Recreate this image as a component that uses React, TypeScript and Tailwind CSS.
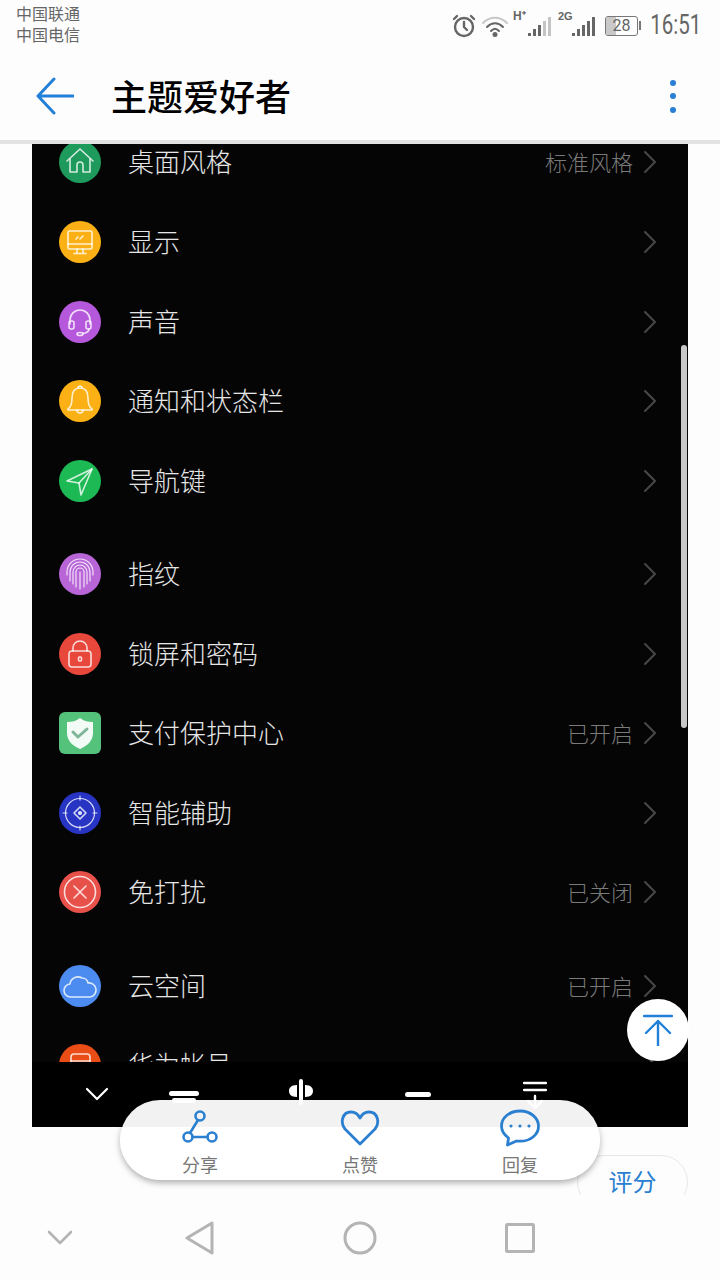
const cjk = { fontFamily: '"Noto Sans CJK SC", "Noto Sans", sans-serif' }

const S = { fill: 'none', stroke: 'currentColor', strokeLinecap: 'round', strokeLinejoin: 'round' } as const

function RowIcon({ name }: { name: string }) {
  const base = { ...S, strokeWidth: 1.6 }
  switch (name) {
    case 'home':
      return <svg width="42" height="42" viewBox="0 0 42 42" {...base}><path d="M8 20 21 8l13 12" /><path d="M11 18v13h7v-7a3 3 0 0 1 6 0v7h7V18" /></svg>
    case 'display':
      return <svg width="42" height="42" viewBox="0 0 42 42" {...base}><rect x="9" y="10" width="24" height="18" rx="1.5" /><path d="M9 23h24M18 28v4M24 28v4M15 32.500h12M19 16l-2 2M24 15l-3 3" /></svg>
    case 'sound':
      return <svg width="42" height="42" viewBox="0 0 42 42" {...base}><path d="M11 23v-4a10 10 0 0 1 20 0v4" /><rect x="10" y="20" width="5" height="8" rx="2" /><rect x="27" y="20" width="5" height="8" rx="2" /><path d="M30 28c0 3-3 4-6 4.500" /><ellipse cx="21" cy="33" rx="3" ry="1.500" /></svg>
    case 'bell':
      return <svg width="42" height="42" viewBox="0 0 42 42" {...base}><path d="M21 8c-6 0-8 5-8 10 0 6-1 9-4 11v1h24v-1c-3-2-4-5-4-11 0-5-2-10-8-10Z" /><path d="M18 30a3 3 0 0 0 6 0M19 8a2 2 0 0 1 4 0" /></svg>
    case 'nav':
      return <svg width="42" height="42" viewBox="0 0 42 42" {...base}><path d="M33 9 8 21l12 2 2 12Z" /><path d="M33 9 20 23" /></svg>
    case 'finger':
      return <svg width="42" height="42" viewBox="0 0 42 42" {...base} strokeWidth="1.2"><path d="M8 22v-3a13 13 0 0 1 26 0v3" /><path d="M11 28v-9a10 10 0 0 1 20 0v9" /><path d="M14 31V19a7 7 0 0 1 14 0v12" /><path d="M17 34V19a4 4 0 0 1 8 0v15" /><path d="M21 19v17" /></svg>
    case 'lock':
      return <svg width="42" height="42" viewBox="0 0 42 42" {...base}><rect x="10" y="18" width="22" height="16" rx="3" /><path d="M14 18v-3a7 7 0 0 1 14 0v3" /><rect x="19.500" y="24" width="3" height="4" rx="1" /></svg>
    case 'shield':
      return (
        <svg width="42" height="42" viewBox="0 0 42 42">
          <path d="M21 6c4 3 8 4 13 4v11c0 8-6 13-13 16C14 34 8 29 8 21V10c5 0 9-1 13-4Z" fill="#f2fbf5" />
          <path d="m14 20 5 5 9-8" fill="none" stroke="#7fb598" strokeWidth="3" strokeLinecap="round" strokeLinejoin="round" />
        </svg>
      )
    case 'assist':
      return <svg width="42" height="42" viewBox="0 0 42 42" {...base} strokeWidth="1.2"><circle cx="21" cy="21" r="14.500" /><path d="M21 4v4M21 34v4M4 21h4M34 21h4" /><path d="m21 15 6 6-6 6-6-6Z" strokeWidth="1.600" /><circle cx="21" cy="21" r="1.500" fill="currentColor" /></svg>
    case 'dnd':
      return <svg width="42" height="42" viewBox="0 0 42 42" {...base}><circle cx="21" cy="21" r="15.500" /><path d="m15 15 12 12M27 15 15 27" /></svg>
    case 'cloud':
      return <svg width="42" height="42" viewBox="0 0 42 42" {...base}><path d="M12 32a6.500 6.500 0 0 1-1-13 8 8 0 0 1 12-6 6 6 0 0 1 6 5 7 7 0 0 1 2 14Z" /></svg>
    default:
      return <svg width="42" height="42" viewBox="0 0 42 42" {...base}><rect x="12" y="10" width="19" height="20" rx="3" /><path d="M12 17h19M18 24h8" /></svg>
  }
}

type Row = { icon: string; bg: string; label: string; value?: string; square?: boolean }

const groups: Row[][] = [
  [
    { icon: 'home', bg: 'bg-[#1e9a5c]', label: '桌面风格', value: '标准风格' },
    { icon: 'display', bg: 'bg-[#fbb116]', label: '显示' },
    { icon: 'sound', bg: 'bg-[#b658dc]', label: '声音' },
    { icon: 'bell', bg: 'bg-[#fbb116]', label: '通知和状态栏' },
    { icon: 'nav', bg: 'bg-[#1cb954]', label: '导航键' },
  ],
  [
    { icon: 'finger', bg: 'bg-[#b865d8]', label: '指纹' },
    { icon: 'lock', bg: 'bg-[#e8483c]', label: '锁屏和密码' },
    { icon: 'shield', bg: 'bg-[#55c27c]', label: '支付保护中心', value: '已开启', square: true },
    { icon: 'assist', bg: 'bg-[#2835c4]', label: '智能辅助' },
    { icon: 'dnd', bg: 'bg-[#e8504a]', label: '免打扰', value: '已关闭' },
  ],
  [
    { icon: 'cloud', bg: 'bg-[#4c8cf0]', label: '云空间', value: '已开启' },
    { icon: 'account', bg: 'bg-[#ea4d15]', label: '华为帐号' },
  ],
]

function SettingRow({ row }: { row: Row }) {
  return (
    <div className="flex h-[79.6px] items-center pl-[27px] pr-[32px]">
      <div className={`flex h-[42px] w-[42px] shrink-0 items-center justify-center text-white/80 ${row.bg} ${row.square ? 'rounded-[6px]' : 'rounded-full'}`}>
        <RowIcon name={row.icon} />
      </div>
      <span className="ml-[27px] flex-1 pb-[2px] text-[26px] font-light leading-none text-[#e6e6e6]">{row.label}</span>
      {row.value && <span className="mr-[11px] pb-[2px] text-[22px] font-light leading-none text-[#7a7a7a]">{row.value}</span>}
      <svg width="12" height="24" viewBox="0 0 12 24" {...S} strokeWidth="2" className="text-[#484848]"><path d="m1 2 10 10L1 22" /></svg>
    </div>
  )
}

function StatusIcons() {
  return (
    <div className="flex items-center text-[#666]">
      <svg width="26" height="26" viewBox="0 0 26 26" {...S} strokeWidth="2.400" className="mr-[4px]">
        <circle cx="13" cy="14" r="9" /><path d="M13 9v5l3 3M3 6l3-3M23 6l-3-3" />
      </svg>
      <svg width="28" height="24" viewBox="0 0 28 24" {...S} strokeWidth="2" className="mr-[4px]">
        <path d="M2 9c7-7 17-7 24 0" className="text-[#c8c8c8]" /><path d="M6 13c5-5 11-5 16 0" /><path d="M10 17c3-3 5-3 8 0" /><circle cx="14" cy="20.500" r="1.500" fill="currentColor" />
      </svg>
      <div className="relative mr-[5px] h-[26px] w-[40px]">
        <span className="absolute left-0 top-[-3px] text-[12px] font-bold leading-[12px]" style={{ fontFamily: '"Liberation Sans", sans-serif' }}>H⁺</span>
        <svg width="26" height="24" viewBox="0 0 26 24" className="absolute right-0 top-[2px]" fill="currentColor">
          <rect x="1" y="18" width="3" height="3" /><rect x="6" y="14" width="3" height="7" /><rect x="11" y="10" width="3" height="11" /><rect x="16" y="6" width="3" height="15" fill="#c4c4c4" /><rect x="21" y="2" width="3" height="19" fill="#c4c4c4" />
        </svg>
      </div>
      <div className="relative mr-[9px] h-[26px] w-[38px]">
        <span className="absolute left-0 top-[-3px] text-[11px] font-bold leading-[12px]" style={{ fontFamily: '"Liberation Sans", sans-serif' }}>2G</span>
        <svg width="24" height="24" viewBox="0 0 24 24" className="absolute right-0 top-[2px]" fill="currentColor">
          <rect x="0" y="18" width="3" height="3" /><rect x="5" y="14" width="3" height="7" /><rect x="10" y="10" width="3" height="11" /><rect x="15" y="6" width="3" height="15" /><rect x="20" y="2" width="3" height="19" />
        </svg>
      </div>
      <div className="flex items-center">
        <div className="relative flex h-[20px] w-[33px] items-center justify-center overflow-hidden rounded-[3px] border border-[#777]">
          <div className="absolute inset-y-0 left-0 w-[10px] bg-[#c9c9c9]" />
          <span className="relative text-[16px] leading-none" style={{ fontFamily: 'Roboto, sans-serif' }}>28</span>
        </div>
        <div className="ml-[1px] h-[9px] w-[2px] bg-[#777]" />
      </div>
      <span className="ml-[3px] inline-block w-[52px] text-center text-[27px] leading-none [transform:scaleX(.76)]" style={{ fontFamily: 'Roboto, sans-serif' }}>16:51</span>
    </div>
  )
}

function Toolbar() {
  return (
    <div className="flex h-[65px] shrink-0 items-start bg-black pl-[48px] pt-[21px] text-white">
      <div className="flex w-[34px] justify-center pt-[4px]">
        <svg width="22" height="14" viewBox="0 0 22 14" {...S} strokeWidth="2.200"><path d="m1 2 10 10L21 2" /></svg>
      </div>
      <div className="ml-[11px] flex w-[117px] justify-center">
        <svg width="30" height="20" viewBox="0 0 30 20" fill="currentColor"><rect x="0" y="8" width="30" height="5" rx="2.500" /><rect x="3" y="15" width="24" height="5" rx="2" /></svg>
      </div>
      <div className="flex w-[117px] justify-center">
        <svg width="26" height="26" viewBox="0 0 26 26" fill="currentColor" className="-mt-[4px]"><rect x="11" y="0" width="4" height="26" rx="2" /><path d="M9 6v12c-6 0-8-3-8-6s2-6 8-6ZM17 6v12c6 0 8-3 8-6s-2-6-8-6Z" /></svg>
      </div>
      <div className="flex w-[117px] justify-center">
        <svg width="28" height="20" viewBox="0 0 28 20" fill="currentColor"><rect x="1" y="9" width="26" height="5" rx="2.500" /></svg>
      </div>
      <div className="flex w-[117px] justify-center">
        <svg width="24" height="28" viewBox="0 0 24 28" {...S} strokeWidth="2.400" className="-mt-[2px]"><path d="M1 2h22M1 9h22M12 15v12M5 20l7 7 7-7" /></svg>
      </div>
    </div>
  )
}

export default function App() {
  return (
    <div className="relative flex h-[1280px] w-[720px] flex-col overflow-hidden bg-[#fdfdfd]" style={cjk}>
      <div className="flex h-[56px] shrink-0 items-start justify-between pl-[16px] pr-[24px] pt-[3px]">
        <div className="text-[16px] leading-[21px] text-[#666]">
          <div>中国联通</div>
          <div>中国电信</div>
        </div>
        <div className="pt-[9px]"><StatusIcons /></div>
      </div>

      <header className="flex h-[84px] shrink-0 items-center pb-[4px] pl-[36px] pr-[44px]">
        <svg width="38" height="38" viewBox="0 0 38 38" {...S} strokeWidth="3" className="text-[#2280d8]"><path d="M37 19H2M18 2 2 19l16 17" /></svg>
        <h1 className="ml-[37px] flex-1 pb-[2px] text-[36px] font-medium leading-none text-black">主题爱好者</h1>
        <div className="flex flex-col gap-[7.500px]">
          <span className="h-[6px] w-[6px] rounded-full bg-[#2a7fd4]" />
          <span className="h-[6px] w-[6px] rounded-full bg-[#2a7fd4]" />
          <span className="h-[6px] w-[6px] rounded-full bg-[#2a7fd4]" />
        </div>
      </header>
      <div className="h-[4px] shrink-0 bg-[#e3e3e3]" />

      <div className="relative mx-[32px] flex h-[983px] shrink-0 flex-col bg-[#050505]">
        <div className="flex-1 overflow-hidden">
          <div className="-mt-[21.400px]">
            {groups.map((group, i) => (
              <div key={i} className={i > 0 ? 'mt-[13.600px]' : ''}>
                {group.map(row => <SettingRow key={row.label} row={row} />)}
              </div>
            ))}
          </div>
        </div>
        <Toolbar />
        <div className="absolute right-[1px] top-[201px] h-[383px] w-[6px] rounded-full bg-[#c8c8c8]" />
      </div>

      <div className="flex h-[68px] shrink-0 justify-end overflow-hidden pr-[32px] pt-[28px]">
        <div className="flex h-[54px] w-[111px] items-center justify-center rounded-full border border-[#e8e8e8] pb-[2px] text-[24px] text-[#2a80d0]">评分</div>
      </div>

      <nav className="flex flex-1 items-center">
        <div className="flex w-[120px] justify-center text-[#b4b4b4]">
          <svg width="26" height="16" viewBox="0 0 26 16" {...S} strokeWidth="2.600"><path d="m2 2 11 11L24 2" /></svg>
        </div>
        <div className="flex w-[160px] justify-center text-[#b4b4b4]">
          <svg width="30" height="34" viewBox="0 0 30 34" {...S} strokeWidth="3"><path d="M27 2 2 17l25 15Z" /></svg>
        </div>
        <div className="flex w-[160px] justify-center text-[#b4b4b4]">
          <svg width="34" height="34" viewBox="0 0 34 34" {...S} strokeWidth="3"><circle cx="17" cy="17" r="15" /></svg>
        </div>
        <div className="flex w-[160px] justify-center text-[#b4b4b4]">
          <svg width="30" height="30" viewBox="0 0 30 30" {...S} strokeWidth="3"><rect x="1.500" y="1.500" width="27" height="27" rx="1" /></svg>
        </div>
      </nav>

      <button className="absolute left-[627px] top-[999px] flex h-[62px] w-[62px] items-center justify-center rounded-full bg-white text-[#2280d8]">
        <svg width="30" height="32" viewBox="0 0 30 32" {...S} strokeWidth="2.400"><path d="M1 2h28M15 32V7M3 19 15 7l12 12" /></svg>
      </button>

      <div className="absolute left-[120px] top-[1100px] flex h-[80px] w-[480px] items-start rounded-[40px] bg-white/95 shadow-[0_3px_6px_rgba(0,0,0,0.3)]">
        <div className="flex w-[160px] flex-col items-center pt-[9px]">
          <svg width="38" height="38" viewBox="0 0 38 38" {...S} strokeWidth="2.600" className="text-[#2a7fd0]">
            <circle cx="19" cy="7" r="4.500" /><circle cx="7" cy="28" r="4.500" /><circle cx="31" cy="28" r="4.500" /><path d="m17 11-8 13M11.500 28h15" />
          </svg>
          <span className="mt-[5px] text-[18px] leading-[24px] text-[#777]">分享</span>
        </div>
        <div className="flex w-[160px] flex-col items-center pt-[9px]">
          <svg width="40" height="38" viewBox="0 0 40 38" {...S} strokeWidth="2.800" className="text-[#2a7fd0]">
            <path d="M20 35 5 20C0 14 2 3 11 3c4 0 7 2 9 6 2-4 5-6 9-6 9 0 11 11 6 17Z" />
          </svg>
          <span className="mt-[5px] text-[18px] leading-[24px] text-[#777]">点赞</span>
        </div>
        <div className="flex w-[160px] flex-col items-center pt-[9px]">
          <svg width="40" height="38" viewBox="0 0 40 38" {...S} strokeWidth="2.800" className="text-[#2a7fd0]">
            <path d="M20 2C9 2 1.500 9 1.500 17c0 5 3 9 7 12l-1 7 9-4c1 .2 2 .2 3.500.2 11 0 18.500-7 18.500-15S31 2 20 2Z" />
            <circle cx="11" cy="17" r="1.600" fill="currentColor" stroke="none" /><circle cx="20" cy="17" r="1.600" fill="currentColor" stroke="none" /><circle cx="29" cy="17" r="1.600" fill="currentColor" stroke="none" />
          </svg>
          <span className="mt-[5px] text-[18px] leading-[24px] text-[#777]">回复</span>
        </div>
      </div>
    </div>
  )
}
